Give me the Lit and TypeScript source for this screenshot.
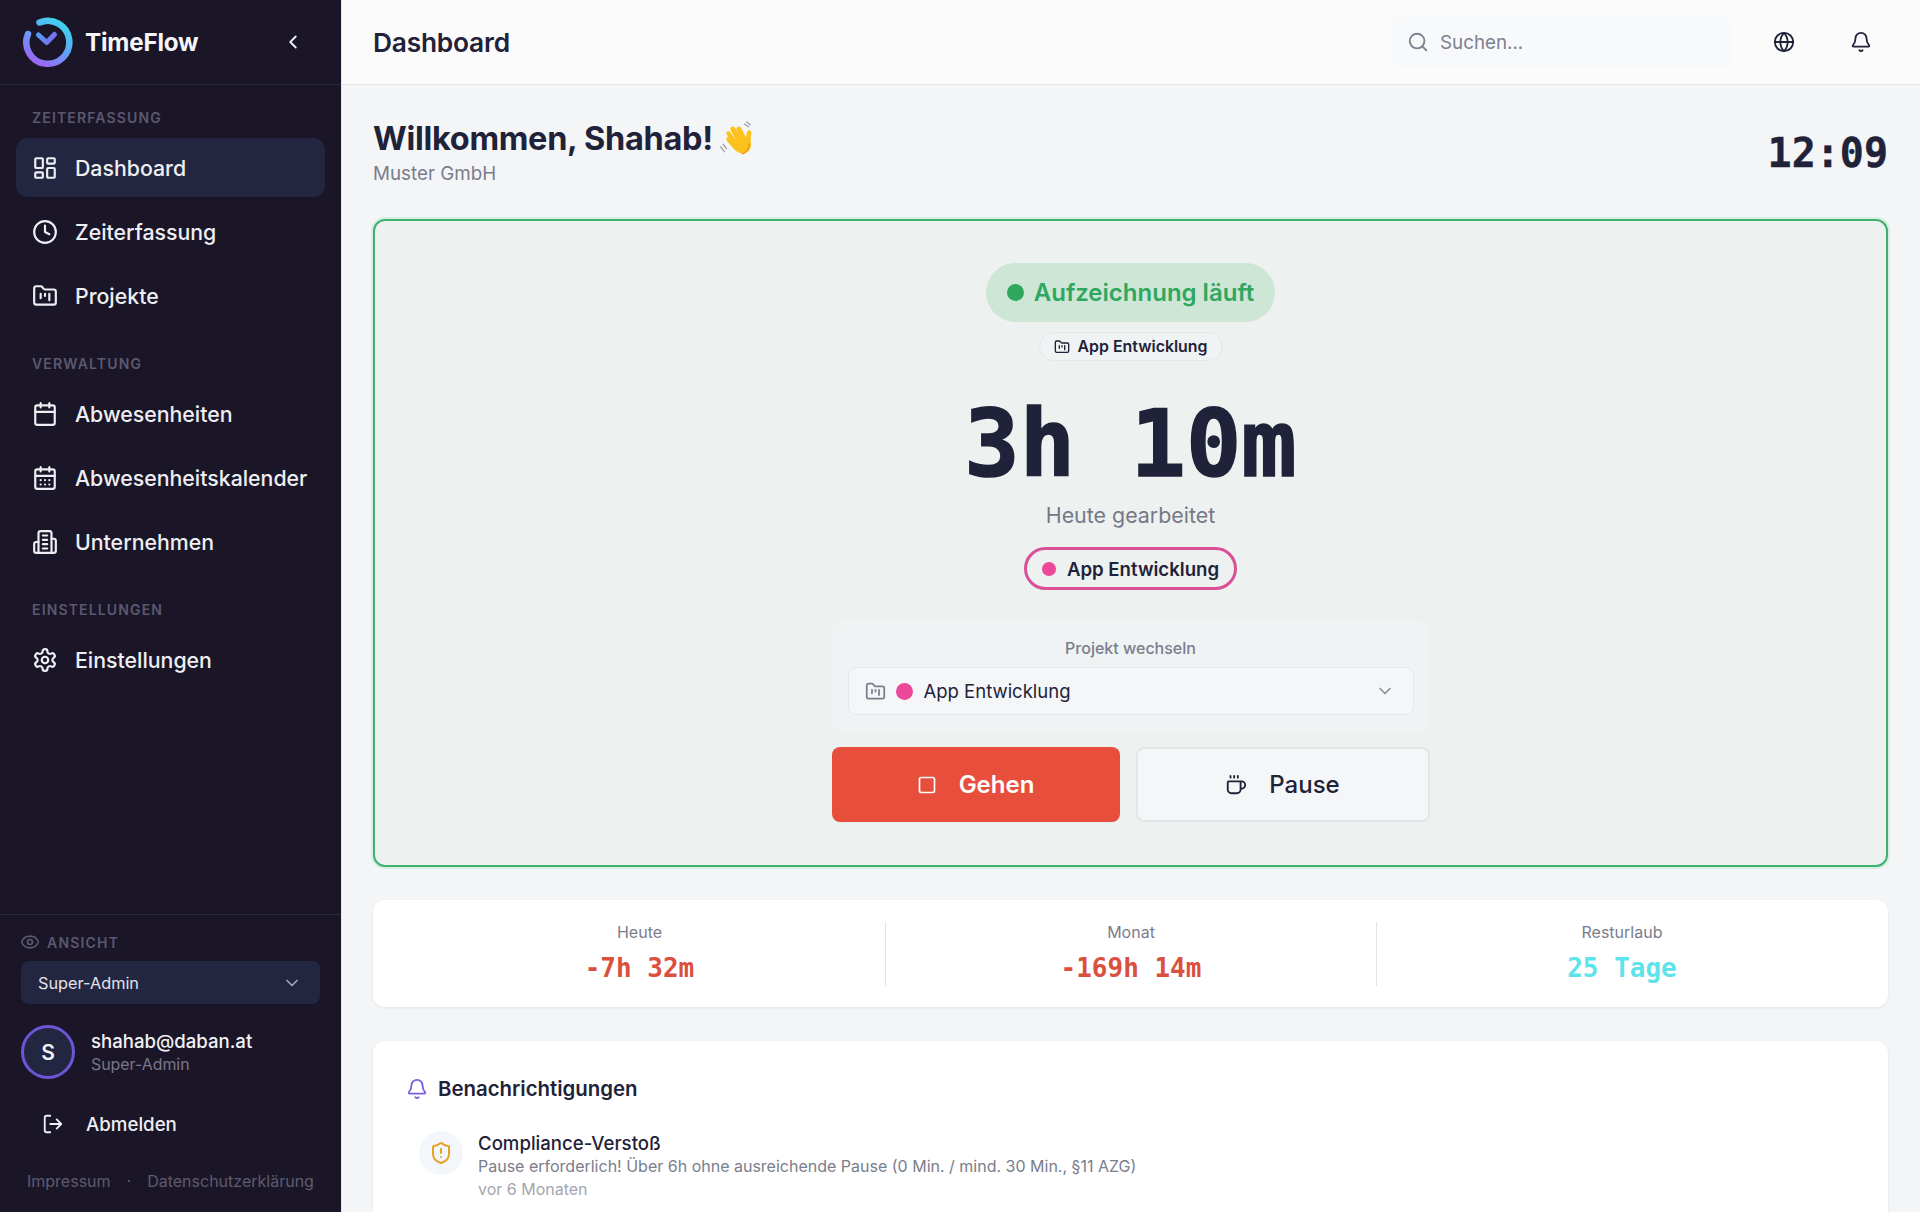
import { LitElement, html, css, svg } from "lit";
import { customElement } from "lit/decorators.js";

const ic = (body: unknown, size = 24, sw = 2, cls = "") => html`<svg class=${cls} width=${size} height=${size} viewBox="0 0 24 24" fill="none" stroke="currentColor" stroke-width=${sw} stroke-linecap="round" stroke-linejoin="round">${body}</svg>`;

const I = {
  dash: svg`<rect x="3" y="3" width="7" height="9" rx="1"/><rect x="14" y="3" width="7" height="5" rx="1"/><rect x="14" y="12" width="7" height="9" rx="1"/><rect x="3" y="16" width="7" height="5" rx="1"/>`,
  clock: svg`<circle cx="12" cy="12" r="10"/><path d="M12 6v6l4 2"/>`,
  folder: svg`<path d="M4 20h16a2 2 0 0 0 2-2V8a2 2 0 0 0-2-2h-7.93a2 2 0 0 1-1.66-.9l-.82-1.2A2 2 0 0 0 7.93 3H4a2 2 0 0 0-2 2v13c0 1.1.9 2 2 2Z"/><path d="M8 10v4M12 10v2M16 10v6"/>`,
  cal: svg`<path d="M8 2v4M16 2v4"/><rect x="3" y="4" width="18" height="18" rx="2"/><path d="M3 10h18"/>`,
  calDays: svg`<path d="M8 2v4M16 2v4"/><rect x="3" y="4" width="18" height="18" rx="2"/><path d="M3 10h18M8 14h.01M12 14h.01M16 14h.01M8 18h.01M12 18h.01M16 18h.01"/>`,
  building: svg`<path d="M6 22V4a2 2 0 0 1 2-2h8a2 2 0 0 1 2 2v18Z"/><path d="M6 12H4a2 2 0 0 0-2 2v6a2 2 0 0 0 2 2h2"/><path d="M18 9h2a2 2 0 0 1 2 2v9a2 2 0 0 1-2 2h-2"/><path d="M10 6h4M10 10h4M10 14h4M10 18h4"/>`,
  gear: svg`<path d="M12.22 2h-.44a2 2 0 0 0-2 2v.18a2 2 0 0 1-1 1.73l-.43.25a2 2 0 0 1-2 0l-.15-.08a2 2 0 0 0-2.73.73l-.22.38a2 2 0 0 0 .73 2.73l.15.1a2 2 0 0 1 1 1.72v.51a2 2 0 0 1-1 1.74l-.15.09a2 2 0 0 0-.73 2.73l.22.38a2 2 0 0 0 2.73.73l.15-.08a2 2 0 0 1 2 0l.43.25a2 2 0 0 1 1 1.73V20a2 2 0 0 0 2 2h.44a2 2 0 0 0 2-2v-.18a2 2 0 0 1 1-1.73l.43-.25a2 2 0 0 1 2 0l.15.08a2 2 0 0 0 2.73-.73l.22-.39a2 2 0 0 0-.73-2.73l-.15-.08a2 2 0 0 1-1-1.74v-.5a2 2 0 0 1 1-1.74l.15-.09a2 2 0 0 0 .73-2.73l-.22-.38a2 2 0 0 0-2.73-.73l-.15.08a2 2 0 0 1-2 0l-.43-.25a2 2 0 0 1-1-1.73V4a2 2 0 0 0-2-2z"/><circle cx="12" cy="12" r="3"/>`,
  chevL: svg`<path d="m15 18-6-6 6-6"/>`,
  chevD: svg`<path d="m6 9 6 6 6-6"/>`,
  eye: svg`<path d="M2.062 12.348a1 1 0 0 1 0-.696 10.75 10.75 0 0 1 19.876 0 1 1 0 0 1 0 .696 10.75 10.75 0 0 1-19.876 0"/><circle cx="12" cy="12" r="3"/>`,
  logout: svg`<path d="M9 21H5a2 2 0 0 1-2-2V5a2 2 0 0 1 2-2h4"/><path d="m16 17 5-5-5-5M21 12H9"/>`,
  search: svg`<circle cx="11" cy="11" r="8"/><path d="m21 21-4.3-4.3"/>`,
  globe: svg`<circle cx="12" cy="12" r="10"/><path d="M12 2a14.5 14.5 0 0 0 0 20 14.5 14.5 0 0 0 0-20M2 12h20"/>`,
  bell: svg`<path d="M10.268 21a2 2 0 0 0 3.464 0"/><path d="M3.262 15.326A1 1 0 0 0 4 17h16a1 1 0 0 0 .74-1.673C19.41 13.956 18 12.499 18 8A6 6 0 0 0 6 8c0 4.499-1.411 5.956-2.738 7.326"/>`,
  square: svg`<rect x="3" y="3" width="18" height="18" rx="2"/>`,
  coffee: svg`<path d="M10 2v2M14 2v2M6 2v2"/><path d="M16 8a1 1 0 0 1 1 1v8a4 4 0 0 1-4 4H7a4 4 0 0 1-4-4V9a1 1 0 0 1 1-1h14a4 4 0 1 1 0 8h-1"/>`,
  shield: svg`<path d="M20 13c0 5-3.5 7.5-7.66 8.95a1 1 0 0 1-.67-.01C7.5 20.5 4 18 4 13V6a1 1 0 0 1 1-1c2 0 4.5-1.2 6.24-2.72a1.17 1.17 0 0 1 1.52 0C14.51 3.81 17 5 19 5a1 1 0 0 1 1 1z"/><path d="M12 8v4M12 16h.01"/>`,
};

const logo = html`<svg class="logo" width="54" height="54" viewBox="0 0 54 54" fill="none">
  <defs>
    <linearGradient id="lg1" x1="38" y1="4" x2="12" y2="48" gradientUnits="userSpaceOnUse"><stop offset="0" stop-color="#3fd6ee"/><stop offset=".45" stop-color="#5ea6f8"/><stop offset="1" stop-color="#9f62f2"/></linearGradient>
    <linearGradient id="lg2" x1="18" y1="18" x2="30" y2="30" gradientUnits="userSpaceOnUse"><stop offset="0" stop-color="#4fa0f2"/><stop offset="1" stop-color="#7f68ee"/></linearGradient>
  </defs>
  <path d="M18.500 7.500A21.500 21.500 0 1 1 7 19" stroke="url(#lg1)" stroke-width="6.500" stroke-linecap="round"/>
  <path d="M17.500 20 25.700 27.500 33.500 19.500" stroke="url(#lg2)" stroke-width="5" stroke-linecap="round" stroke-linejoin="round"/>
</svg>`;

const wave = html`<svg class="wave" width="36" height="36" viewBox="0 0 34 34" fill="none">
  <path d="M5 22l3 4M2.500 24.500 6 29" stroke="#9a9aa2" stroke-width="1.200" stroke-linecap="round"/>
  <path d="M25 3l4 2.500M27 1l3.500 2.500" stroke="#9a9aa2" stroke-width="1.200" stroke-linecap="round"/>
  <path d="M8 10.500c1-1.500 3-1 3.800.3L17 18 12 9c-.8-1.400-.2-3 1-3.500 1.300-.6 2.500-.1 3.300 1.300L21 15l-3.300-6.200c-.7-1.400-.2-2.800 1-3.400 1.200-.6 2.500-.1 3.200 1.200l4.600 8.900.4-3.500c.3-1.800 1.600-3.600 3.300-3.200 1.200.3 1.500 1.500 1.300 2.800-.6 3.300-.7 6.400-.4 9.400.5 4.300-1.400 7.300-4.700 9C22.500 31.500 18 30 15 26.500L8.500 18.800C7.500 17.500 7.700 16 8.700 15.200c.4-.3.700-.4 1.100-.4l-1.300-1.900C8 12.100 7.600 11.200 8 10.500Z" fill="#fcc21b"/>
  <path d="M23 31c3-1.200 6.500-4 6.500-9.500" stroke="#e39b17" stroke-width="1.200" stroke-linecap="round"/>
</svg>`;

@customElement("app-root")
export class AppRoot extends LitElement {
  static styles = css`
    :host { display: block; height: 1212px; overflow: hidden; font-family: Inter, "Noto Sans", sans-serif; color: #1f2238; background: #f4f5f7; }
    * { box-sizing: border-box; }
    svg { display: block; flex: none; }
    .app { display: flex; height: 1212px; }
    .side { width: 342px; flex: none; background: #1a1628; color: #f1f1f6; display: flex; flex-direction: column; border-right: 1px solid #e6e7ea; }
    .brand { height: 85px; flex: none; display: flex; align-items: center; padding: 0 0 0 21px; border-bottom: 1px solid #2b2839; gap: 10px; }
    .brand b { font-size: 24.200px; font-weight: 700; letter-spacing: -.2px; color: #f5f5f8; }
    .collapse { margin-left: auto; margin-right: 37px; color: #f1f1f6; }
    nav { padding: 0 16px; flex: 1; display: flex; flex-direction: column; }
    .sec { font-size: 14px; line-height: 17px; font-weight: 600; letter-spacing: 1.150px; color: #5c5870; padding-left: 16px; margin: 24px 0 12px; }
    .sec.next { margin-top: 25px; }
    .item { height: 59px; display: flex; align-items: center; gap: 17px; padding-left: 16px; border-radius: 12px; font-size: 21.300px; font-weight: 500; margin-bottom: 5px; color: #eeeef3; }
    .item.active { background: #232640; }
    .foot { border-top: 1px solid #2b2839; padding: 17px 21px 0; height: 298px; flex: none; }
    .view { display: flex; align-items: center; gap: 7px; font-size: 14px; line-height: 17px; font-weight: 600; letter-spacing: 1.200px; color: #5c5870; margin-left: -1px; }
    .roleSel { margin-top: 9px; height: 43px; width: 299px; border-radius: 8px; background: #232640; display: flex; align-items: center; justify-content: space-between; padding: 0 18px 0 17px; font-size: 16.300px; color: #e3e3ea; }
    .roleSel svg { color: #a6a6b4; }
    .user { display: flex; align-items: center; gap: 16px; margin-top: 21px; }
    .avatar { width: 54px; height: 54px; border-radius: 50%; border: 3px solid #6d55d8; background: #232640; display: flex; align-items: center; justify-content: center; font-weight: 600; font-size: 21px; color: #f1f1f6; }
    .mail { font-size: 18.600px; line-height: 25px; font-weight: 500; color: #f1f1f6; }
    .role { font-size: 15.900px; line-height: 22px; color: #7a7688; }
    .logoutRow { display: flex; align-items: center; gap: 22px; padding-left: 21px; margin-top: 24px; height: 42px; font-size: 18.700px; font-weight: 500; color: #eeeef3; }
    .legal { display: flex; align-items: center; margin-top: 25px; padding-left: 6px; font-size: 16px; color: #5f5b6c; line-height: 22px; }
    .legal i { font-style: normal; margin: 0 16px; }

    main { flex: 1; min-width: 0; display: flex; flex-direction: column; }
    header { height: 85px; flex: none; background: #fbfbfc; border-bottom: 1px solid #e6e7ea; display: flex; align-items: center; padding: 0 32px 0 31px; }
    header h1 { margin: 0; font-size: 26.300px; font-weight: 600; letter-spacing: -.2px; }
    .search { margin-left: auto; width: 339px; height: 52px; background: #f8f9fb; border-radius: 8px; display: flex; align-items: center; gap: 11px; padding-left: 15px; color: #7d808e; font-size: 18.800px; }
    .hbtn { width: 24px; color: #1f2238; }
    .hbtn.a { margin-left: 41.500px; }
    .hbtn.b { margin-left: 53px; margin-right: 14.500px; }
    .content { padding: 34px 32px 0 31px; flex: 1; min-height: 0; overflow: hidden; }
    .welcome { display: flex; justify-content: space-between; align-items: flex-start; height: 66px; }
    .welcome h2 { margin: 0; font-size: 32.500px; line-height: 40px; font-weight: 700; letter-spacing: -.3px; display: flex; align-items: center; gap: 5px; }
    .welcome p { margin: 2px 0 0; font-size: 18.800px; line-height: 26px; color: #7a7d8b; }
    .clock { margin-top: 10.500px; font-family: "DejaVu Sans Mono", "Liberation Mono", monospace; font-weight: 700; font-size: 40px; color: #1f2238; -webkit-text-stroke: .4px #1f2238; }

    .track { margin-top: 34px; height: 648px; border: 2px solid #3fb16f; box-shadow: 0 0 0 2px #d5efe0; border-radius: 12px; background: #edf1f0; display: flex; flex-direction: column; align-items: center; padding-top: 42px; }
    .pill { height: 59px; border-radius: 30px; background: #cde6d6; color: #2fa75f; display: flex; align-items: center; gap: 10px; padding: 0 21px; font-size: 24px; font-weight: 600; }
    .pill u { width: 17px; height: 17px; border-radius: 50%; background: #2fa75f; }
    .chip { margin-top: 10px; height: 29px; border-radius: 15px; border: 1px solid #e5e7ea; background: #f0f3f3; display: flex; align-items: center; gap: 8px; padding: 0 14px; font-size: 15.900px; font-weight: 600; }
    .timer { margin-top: 29px; height: 110px; font-family: "DejaVu Sans Mono", "Liberation Mono", monospace; font-weight: 700; font-size: 92px; line-height: 110px; color: #1f2238; -webkit-text-stroke: 1.500px #1f2238; }
    .sub { font-size: 21.400px; line-height: 30px; color: #757988; }
    .prj { margin-top: 17px; height: 43px; border-radius: 22px; border: 3px solid #db4f96; display: flex; align-items: center; gap: 11px; padding: 0 15px; font-size: 18.600px; font-weight: 600; }
    .prj u { width: 14px; height: 14px; border-radius: 50%; background: #ec4899; }
    .switch { margin-top: 31px; width: 598px; height: 111px; border-radius: 12px; background: #f0f3f4; display: flex; flex-direction: column; align-items: center; padding: 16px 16px 0; }
    .switch label { font-size: 16px; line-height: 22px; font-weight: 500; color: #7a7d8b; }
    .sel { margin-top: 8px; width: 100%; height: 48px; border: 1px solid #e5e7ea; border-radius: 8px; background: #f5f6f8; display: flex; align-items: center; padding: 0 18px 0 16px; font-size: 18.500px; color: #1f2238; }
    .sel .f { color: #7a7d8b; margin-right: 10px; }
    .sel u { width: 17px; height: 17px; border-radius: 50%; background: #ec4899; margin-right: 11px; }
    .sel .c { margin-left: auto; color: #8b8e9b; }
    .btns { margin-top: 15px; width: 598px; display: flex; gap: 16px; }
    .btn { height: 75px; border-radius: 8px; display: flex; align-items: center; justify-content: center; gap: 22px; font-size: 24px; }
    .go { width: 288px; background: #e74e3c; color: #fff; font-weight: 600; }
    .pause { flex: 1; background: #f5f6f8; border: 2px solid #e3e5e8; font-weight: 500; color: #1f2238; }

    .stats { margin-top: 33px; height: 107px; border-radius: 12px; background: #fff; box-shadow: 0 1px 3px rgba(20,25,40,.08); display: grid; grid-template-columns: repeat(3, 1fr); align-items: center; padding: 0 21px; }
    .stat { height: 64px; display: flex; flex-direction: column; align-items: center; border-left: 1px solid #e3e5e8; }
    .stat:first-child { border-left: 0; }
    .stat span { font-size: 16px; line-height: 22px; color: #7a7d8b; margin-top: -1px; }
    .stat b { font-family: "DejaVu Sans Mono", "Liberation Mono", monospace; font-size: 26px; line-height: 36px; margin-top: 7px; font-weight: 700; }
    .neg { color: #d9503f; }
    .pos { color: #5fe3ea; }
    .notes { margin-top: 34px; height: 300px; border-radius: 12px; background: #fff; box-shadow: 0 1px 3px rgba(20,25,40,.08); padding: 34px 33px 0; }
    .notes h3 { margin: 0; display: flex; align-items: center; gap: 10px; font-size: 20.400px; line-height: 28px; font-weight: 600; }
    .notes h3 svg { color: #7c5ce0; }
    .note { display: flex; gap: 15px; margin: 28px 0 0 13px; }
    .badge { width: 44px; height: 44px; border-radius: 50%; background: #f3f6fb; color: #e6a124; display: flex; align-items: center; justify-content: center; flex: none; }
    .note b { display: block; font-size: 18.600px; line-height: 24px; font-weight: 500; }
    .note p { margin: 0; font-size: 16px; line-height: 22px; color: #7a7d8b; }
    .note small { display: block; margin-top: 1px; font-size: 16px; line-height: 23px; color: #a3a5af; }
  `;

  private navItem(icon: unknown, label: string, active = false) {
    return html`<div class="item ${active ? "active" : ""}">${ic(icon, 26)}<span>${label}</span></div>`;
  }

  render() {
    return html`<div class="app">
      <aside class="side">
        <div class="brand">${logo}<b>TimeFlow</b><span class="collapse">${ic(I.chevL, 22)}</span></div>
        <nav>
          <div class="sec">ZEITERFASSUNG</div>
          ${this.navItem(I.dash, "Dashboard", true)}
          ${this.navItem(I.clock, "Zeiterfassung")}
          ${this.navItem(I.folder, "Projekte")}
          <div class="sec next">VERWALTUNG</div>
          ${this.navItem(I.cal, "Abwesenheiten")}
          ${this.navItem(I.calDays, "Abwesenheitskalender")}
          ${this.navItem(I.building, "Unternehmen")}
          <div class="sec next">EINSTELLUNGEN</div>
          ${this.navItem(I.gear, "Einstellungen")}
        </nav>
        <div class="foot">
          <div class="view">${ic(I.eye, 20)}<span>ANSICHT</span></div>
          <div class="roleSel"><span>Super-Admin</span>${ic(I.chevD, 20)}</div>
          <div class="user"><div class="avatar">S</div><div><div class="mail">shahab@daban.at</div><div class="role">Super-Admin</div></div></div>
          <div class="logoutRow">${ic(I.logout, 22)}<span>Abmelden</span></div>
          <div class="legal"><span>Impressum</span><i>·</i><span>Datenschutzerklärung</span></div>
        </div>
      </aside>
      <main>
        <header>
          <h1>Dashboard</h1>
          <div class="search">${ic(I.search, 22)}<span>Suchen...</span></div>
          <div class="hbtn a">${ic(I.globe, 22)}</div>
          <div class="hbtn b">${ic(I.bell, 22)}</div>
        </header>
        <div class="content">
          <div class="welcome">
            <div><h2>Willkommen, Shahab! ${wave}</h2><p>Muster GmbH</p></div>
            <div class="clock">12:09</div>
          </div>
          <section class="track">
            <div class="pill"><u></u>Aufzeichnung läuft</div>
            <div class="chip">${ic(I.folder, 16)}App Entwicklung</div>
            <div class="timer">3h 10m</div>
            <div class="sub">Heute gearbeitet</div>
            <div class="prj"><u></u>App Entwicklung</div>
            <div class="switch">
              <label>Projekt wechseln</label>
              <div class="sel"><span class="f">${ic(I.folder, 21)}</span><u></u><span>App Entwicklung</span><span class="c">${ic(I.chevD, 20)}</span></div>
            </div>
            <div class="btns">
              <div class="btn go">${ic(I.square, 20)}<span>Gehen</span></div>
              <div class="btn pause">${ic(I.coffee, 22)}<span>Pause</span></div>
            </div>
          </section>
          <section class="stats">
            <div class="stat"><span>Heute</span><b class="neg">-7h 32m</b></div>
            <div class="stat"><span>Monat</span><b class="neg">-169h 14m</b></div>
            <div class="stat"><span>Resturlaub</span><b class="pos">25 Tage</b></div>
          </section>
          <section class="notes">
            <h3>${ic(I.bell, 22)}<span>Benachrichtigungen</span></h3>
            <div class="note">
              <div class="badge">${ic(I.shield, 24)}</div>
              <div><b>Compliance-Verstoß</b><p>Pause erforderlich! Über 6h ohne ausreichende Pause (0 Min. / mind. 30 Min., §11 AZG)</p><small>vor 6 Monaten</small></div>
            </div>
          </section>
        </div>
      </main>
    </div>`;
  }
}
